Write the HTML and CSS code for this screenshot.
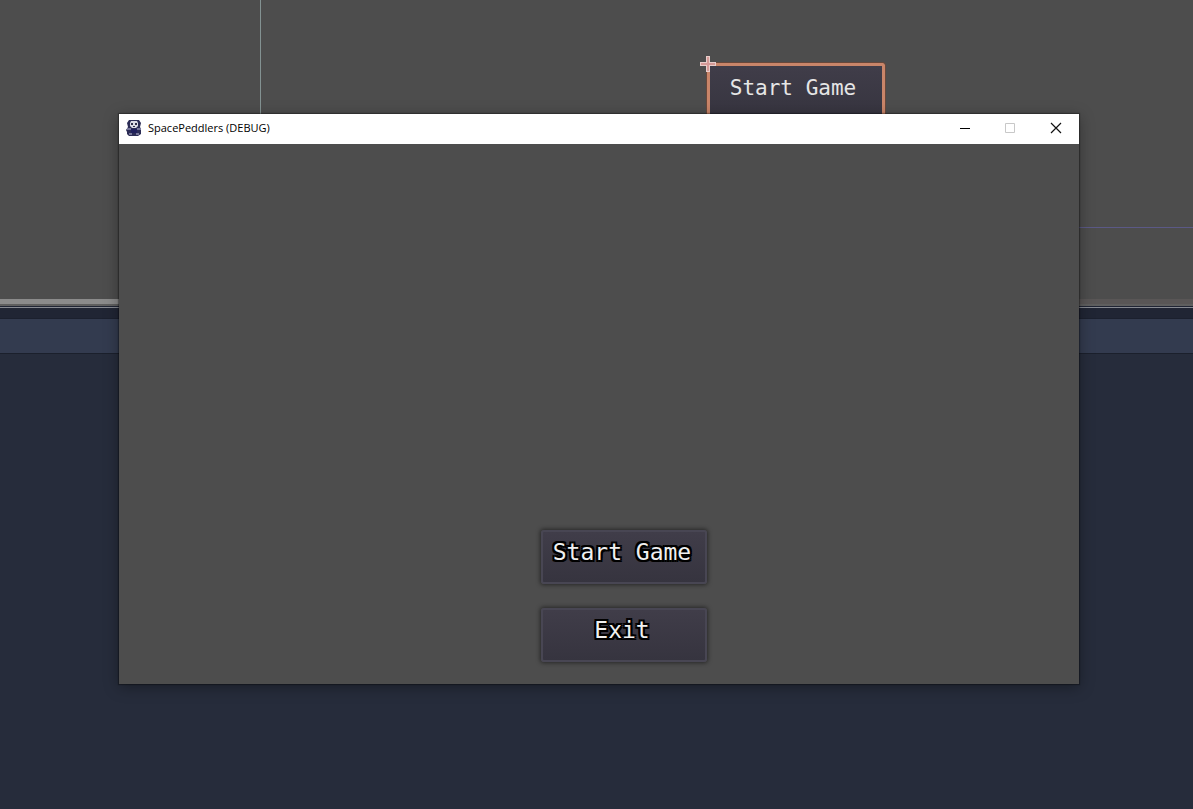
FILE: index.html
```
<!DOCTYPE html>
<html lang="en">
<head>
<meta charset="utf-8">
<meta name="viewport" content="width=device-width, initial-scale=1">
<title>SpacePeddlers (DEBUG)</title>
<link rel="stylesheet" href="styles.css">
</head>
<body>
<div class="desktop">
  <section class="canvas" aria-label="Scene editor">
    <div class="guide-vertical"></div>
    <div class="guide-horizontal"></div>
    <div class="selected-node">
      <span>Start Game</span>
      <svg class="anchor" viewBox="0 0 16 16" aria-hidden="true">
        <path d="M6 0h4v6h6v4h-6v6H6v-6H0V6h6z" fill="#e8cdca"/>
        <path d="M8 1v14M1 8h14" stroke="#d59a97" stroke-width="2" fill="none"/>
      </svg>
    </div>
    <div class="scrollbar"></div>
  </section>
  <div class="divider"></div>
  <div class="panel-tabs"></div>
  <div class="panel-body"></div>

  <main class="window">
    <header class="titlebar">
      <svg class="app-icon" viewBox="0 0 16 16" aria-hidden="true">
        <path d="M3 0h10l2 3-1 4 1 2v5l-3 2H3l-2-2v-2l-1-2 2-3-1-4z" fill="#2b2c55"/>
        <path d="M1 8h4v2H1zM11 8h4v2h-4zM3 13h3v2H3zM10 13h3v2h-3z" fill="#77779a"/>
        <path d="M5 1h6l1 2v3l-2 2H6L4 6V3z" fill="#dcdce6"/>
        <path d="M5 3h2v2H5zM9 3h2v2H9zM7 6h2v1H7z" fill="#30304b"/>
        <path d="M5 9h6v4H5z" fill="#20205c"/>
      </svg>
      <h1 class="title">SpacePeddlers (DEBUG)</h1>
      <div class="controls">
        <button class="control" type="button" aria-label="Minimize">
          <svg viewBox="0 0 12 12"><path d="M2 6.500h10" stroke="#000"/></svg>
        </button>
        <button class="control" type="button" aria-label="Maximize" disabled>
          <svg viewBox="0 0 12 12"><path d="M1.500 1.500h9v9h-9z" stroke="#c8c8c8" fill="none"/></svg>
        </button>
        <button class="control" type="button" aria-label="Close">
          <svg viewBox="0 0 12 12"><path d="M1 1l10 10M11 1L1 11" stroke="#111" stroke-width="1.2"/></svg>
        </button>
      </div>
    </header>
    <nav class="menu" aria-label="Main menu">
      <button class="menu-button" type="button">Start Game</button>
      <button class="menu-button" type="button">Exit</button>
    </nav>
  </main>
</div>
</body>
</html>
```
FILE: styles.css
```
* { box-sizing: border-box; }

body { margin: 0; }

.desktop {
  position: relative;
  display: flex;
  flex-direction: column;
  min-height: 100vh;
  overflow: hidden;
  background: #262c3b;
}

.canvas {
  position: relative;
  display: flex;
  flex-direction: column;
  justify-content: flex-end;
  height: 306px;
  background: #4d4d4d;
}

.guide-vertical {
  position: absolute;
  left: 260px;
  top: 0;
  bottom: 0;
  width: 1px;
  background: #839292;
}

.guide-horizontal {
  position: absolute;
  left: 260px;
  right: 0;
  top: 227px;
  height: 1px;
  background: #5b5986;
}

.selected-node {
  position: absolute;
  left: 707px;
  top: 63px;
  width: 178px;
  height: 60px;
  padding: 8px 6px 0 0;
  border: 3px solid #c98569;
  border-radius: 2px;
  outline: 1px solid #68483b;
  background: linear-gradient(#403d49, #36343f);
  color: #e6e6e6;
  font: 21px/28px "DejaVu Sans Mono", monospace;
  text-align: center;
}

.anchor {
  position: absolute;
  left: -10px;
  top: -10px;
  width: 16px;
  height: 16px;
}

.scrollbar {
  height: 7px;
  border-bottom: 2px solid #5f5f5f;
  background: linear-gradient(90deg, #8b8b8b 260px, #595656 260px);
}

.divider {
  height: 13px;
  border-top: 1px solid #202534;
  border-bottom: 1px solid #1b202e;
  background: linear-gradient(#868991 1px, #202534 1px);
}

.panel-tabs {
  height: 35px;
  border-bottom: 1px solid #1b202c;
  background: #333b4f;
}

.panel-body {
  flex: 1;
  background: #262c3b;
}

.window {
  position: absolute;
  top: 114px;
  left: 119px;
  right: 114px;
  bottom: 125px;
  display: flex;
  flex-direction: column;
  background: #4d4d4d;
  box-shadow: 0 0 1px 1px rgba(0, 0, 0, 0.3), 0 3px 14px rgba(0, 0, 0, 0.35);
}

.titlebar {
  display: flex;
  align-items: center;
  height: 30px;
  padding: 0 0 2px 7px;
  background: #fff;
}

.app-icon {
  width: 16px;
  height: 16px;
  margin-right: 6px;
}

.title {
  margin: 0;
  color: #000;
  font: 11px/16px "Open Sans", sans-serif;
}

.controls {
  display: flex;
  margin-left: auto;
}

.control {
  display: grid;
  place-items: center;
  width: 46px;
  height: 28px;
  padding: 0;
  border: 0;
  background: none;
}

.control svg {
  width: 12px;
  height: 12px;
}

.menu {
  display: flex;
  flex: 1;
  flex-direction: column;
  align-items: center;
  justify-content: flex-end;
  gap: 24px;
  padding: 0 0 22px 50px;
}

.menu-button {
  width: 166px;
  height: 54px;
  padding: 0 4px 10px 0;
  border: 2px solid #484653;
  border-radius: 3px;
  background: linear-gradient(#403d49, #36343f);
  box-shadow: 0 0 4px 1px rgba(0, 0, 0, 0.5);
  color: #f0f0f0;
  font: 23px/28px "DejaVu Sans Mono", monospace;
  white-space: nowrap;
  text-shadow: 2px 0 #000, -2px 0 #000, 0 2px #000, 0 -2px #000,
    2px 2px #000, -2px 2px #000, 2px -2px #000, -2px -2px #000;
}
```
